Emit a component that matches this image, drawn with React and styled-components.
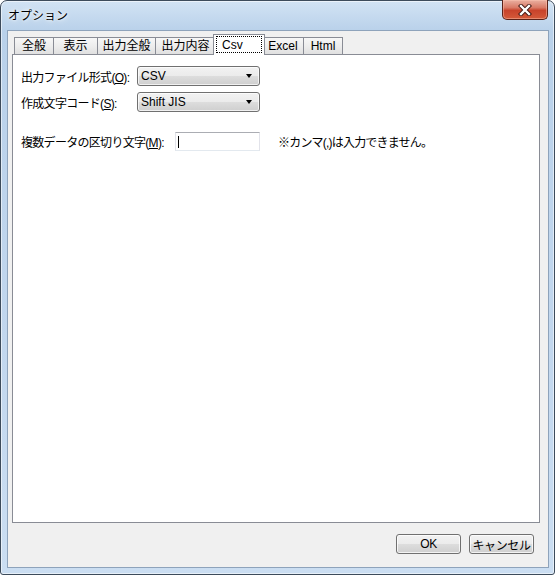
import React from "react";
import styled, { createGlobalStyle } from "styled-components";

const GlobalStyle = createGlobalStyle`
  html, body {
    margin: 0;
    padding: 0;
    background: #ffffff;
  }
  body {
    font-family: "Liberation Sans", "Noto Sans CJK JP", sans-serif;
    font-size: 12px;
    color: #000000;
  }
`;

const Window = styled.div`
  box-sizing: border-box;
  width: 555px;
  height: 575px;
  display: flex;
  flex-direction: column;
  border: 1px solid #3d4b5b;
  border-radius: 7px 7px 3px 3px;
  background: linear-gradient(to bottom, #d2e3f4 0px, #b9d1ea 30px, #c2d7ee 60%, #cbdef2 100%);
  box-shadow: inset 0 0 0 1px rgba(255, 255, 255, 0.55);
`;

const TitleBar = styled.div`
  height: 29px;
  display: flex;
  align-items: flex-start;
`;

const Title = styled.span`
  padding: 5px 0 0 7px;
  font-family: "Noto Sans CJK JP", sans-serif;
  font-size: 12px;
  line-height: 17px;
  text-shadow: 0 0 6px #ffffff, 0 0 3px #ffffff;
`;

const CloseButton = styled.div`
  box-sizing: border-box;
  margin: -1px 6px 0 auto;
  width: 46px;
  height: 20px;
  display: flex;
  align-items: center;
  justify-content: center;
  border: 1px solid #5a2219;
  border-top: none;
  border-radius: 0 0 5px 5px;
  background: linear-gradient(to bottom, #eab0a1 0%, #d97a66 40%, #c8432b 55%, #d45a3a 100%);
  box-shadow: inset 0 0 0 1px rgba(255, 200, 180, 0.45);
`;

const Client = styled.div`
  flex: 1;
  display: flex;
  flex-direction: column;
  margin: 0 5px 6px 6px;
  padding: 3px 8px 0 4px;
  border: 1px solid #8ea3bb;
  background: #f0f0f0;
`;

const TabStrip = styled.div`
  height: 20px;
  display: flex;
  align-items: flex-end;
  padding-left: 2px;
`;

const Tab = styled.div`
  box-sizing: border-box;
  position: relative;
  width: ${(p) => (p.$active ? p.$width + 4 : p.$width)}px;
  height: ${(p) => (p.$active ? 21 : 17)}px;
  margin: ${(p) => (p.$active ? "0 -3px -1px -2px" : "0 -1px 0 0")};
  z-index: ${(p) => (p.$active ? 1 : 0)};
  display: flex;
  align-items: center;
  justify-content: ${(p) => (p.$active ? "stretch" : "center")};
  border: 1px solid #898c95;
  border-bottom: none;
  background: ${(p) =>
    p.$active
      ? "#ffffff"
      : "linear-gradient(to bottom, #f7f7f7 0%, #ececec 55%, #e0e0e0 100%)"};
  white-space: nowrap;
  line-height: 14px;
`;

const FocusRing = styled.span`
  flex: 1;
  align-self: stretch;
  margin: 1px 2px 2px 2px;
  padding-left: 5px;
  border: 1px dotted #000000;
  display: flex;
  align-items: center;
`;

const Panel = styled.div`
  flex: 1;
  padding: 11px 0 0 8px;
  border: 1px solid #898c95;
  background: #ffffff;
`;

const Row = styled.div`
  display: flex;
  align-items: center;
  height: ${(p) => p.$height || 20}px;
  margin-top: ${(p) => p.$top || 0}px;
`;

const Label = styled.span`
  width: ${(p) => p.$width}px;
  flex: none;
  white-space: nowrap;
  letter-spacing: -0.7px;
`;

const Combo = styled.div`
  box-sizing: border-box;
  width: 123px;
  height: 20px;
  display: flex;
  align-items: center;
  padding: 0 7px 0 3px;
  border: 1px solid #707070;
  border-radius: 3px;
  background: linear-gradient(to bottom, #f2f2f2 0%, #ebebeb 50%, #dddddd 50%, #cfcfcf 100%);
  box-shadow: inset 0 0 0 1px rgba(255, 255, 255, 0.7);
`;

const ComboText = styled.span`
  flex: 1;
`;

const Arrow = styled.span`
  width: 0;
  height: 0;
  border-left: 3.5px solid transparent;
  border-right: 3.5px solid transparent;
  border-top: 4px solid #000000;
`;

const TextBox = styled.div`
  box-sizing: border-box;
  width: 85px;
  height: 19px;
  display: flex;
  align-items: center;
  padding-left: 2px;
  border: 1px solid #e2e3ea;
  border-top-color: #abadb3;
  border-bottom-color: #e3e9ef;
  background: #ffffff;
`;

const Caret = styled.span`
  width: 1px;
  height: 12px;
  background: #000000;
`;

const Hint = styled.span`
  margin-left: 18px;
  white-space: nowrap;
  letter-spacing: -0.8px;
`;

const ButtonRow = styled.div`
  display: flex;
  justify-content: flex-end;
  gap: 8px;
  padding: 11px 6px 13px 0;
`;

const Button = styled.div`
  box-sizing: border-box;
  width: 65px;
  height: 20px;
  display: flex;
  align-items: center;
  justify-content: center;
  border: 1px solid #707070;
  border-radius: 3px;
  background: linear-gradient(to bottom, #f2f2f2 0%, #ebebeb 50%, #dddddd 50%, #cfcfcf 100%);
  box-shadow: inset 0 0 0 1px rgba(255, 255, 255, 0.75);
  letter-spacing: -0.4px;
`;

const tabs = [
  { label: "全般", width: 40 },
  { label: "表示", width: 45 },
  { label: "出力全般", width: 59 },
  { label: "出力内容", width: 61 },
  { label: "Csv", width: 48, active: true },
  { label: "Excel", width: 42 },
  { label: "Html", width: 40 },
];

export default function App() {
  return (
    <>
      <GlobalStyle />
      <Window>
        <TitleBar>
          <Title>オプション</Title>
          <CloseButton>
            <svg width="14" height="12" viewBox="0 0 14 12">
              <path d="M3 2 L11 10 M11 2 L3 10" stroke="#3e1510" strokeWidth="4.2" strokeLinecap="square" fill="none" />
              <path d="M3 2 L11 10 M11 2 L3 10" stroke="#ffffff" strokeWidth="2.4" strokeLinecap="square" fill="none" />
            </svg>
          </CloseButton>
        </TitleBar>
        <Client>
          <TabStrip>
            {tabs.map((t) =>
              t.active ? (
                <Tab key={t.label} $width={t.width} $active>
                  <FocusRing>{t.label}</FocusRing>
                </Tab>
              ) : (
                <Tab key={t.label} $width={t.width}>
                  {t.label}
                </Tab>
              )
            )}
          </TabStrip>
          <Panel>
            <Row>
              <Label $width={116}>
                出力ファイル形式(<u>O</u>):
              </Label>
              <Combo>
                <ComboText>CSV</ComboText>
                <Arrow />
              </Combo>
            </Row>
            <Row $top={6}>
              <Label $width={116}>
                作成文字コード(<u>S</u>):
              </Label>
              <Combo>
                <ComboText>Shift JIS</ComboText>
                <Arrow />
              </Combo>
            </Row>
            <Row $top={20} $height={19}>
              <Label $width={154}>
                複数データの区切り文字(<u>M</u>):
              </Label>
              <TextBox>
                <Caret />
              </TextBox>
              <Hint>※カンマ(,)は入力できません。</Hint>
            </Row>
          </Panel>
          <ButtonRow>
            <Button>OK</Button>
            <Button>キャンセル</Button>
          </ButtonRow>
        </Client>
      </Window>
    </>
  );
}
